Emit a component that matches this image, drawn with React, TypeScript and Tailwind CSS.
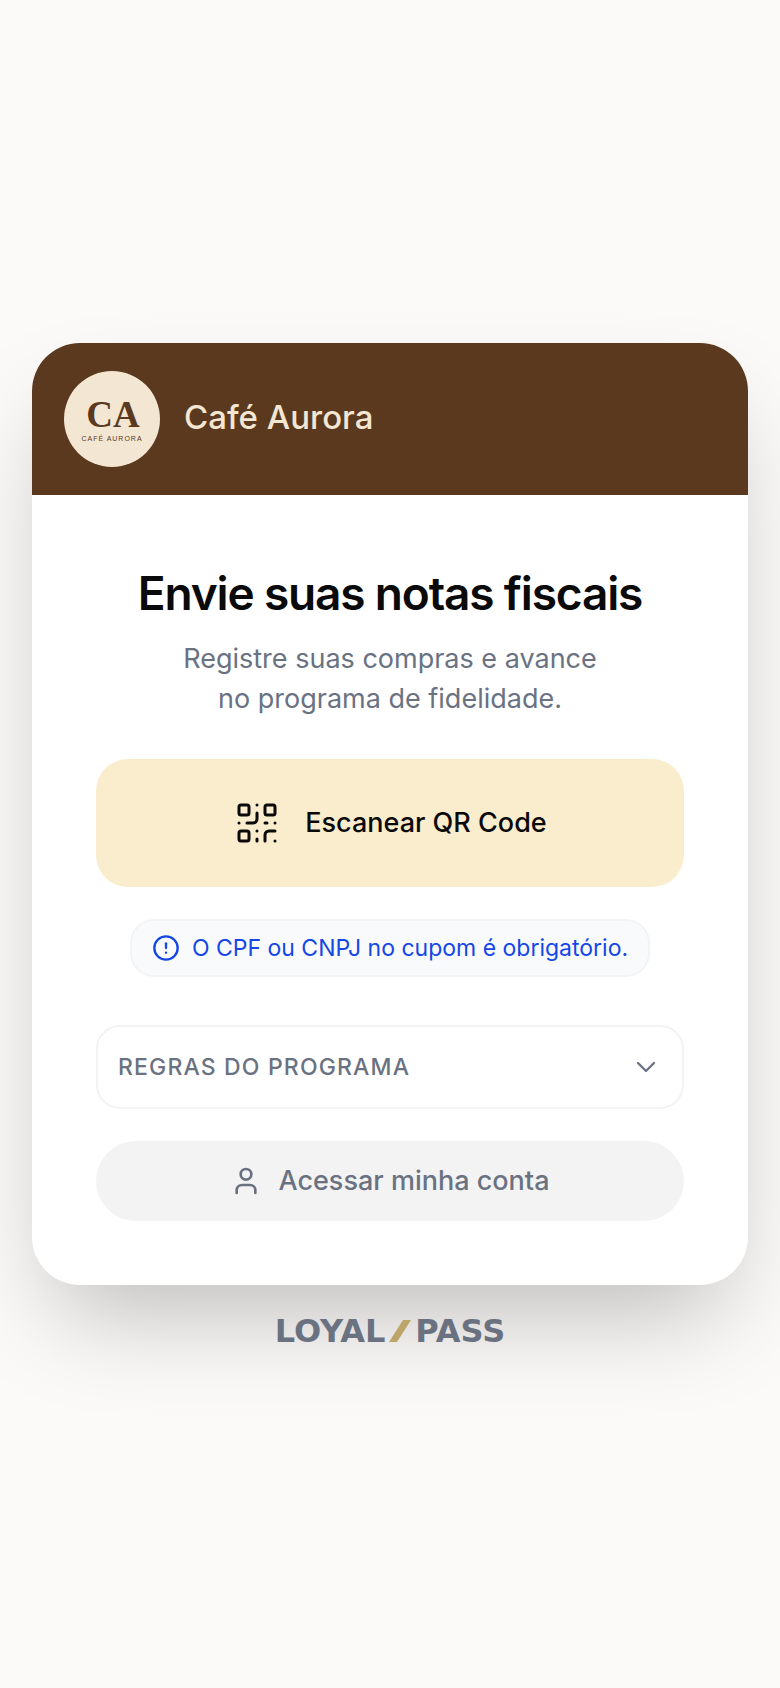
import { ChevronDown, CircleAlert, QrCode, User } from "lucide-react";
import { useState } from "react";

const BrandLogo = () => (
    <svg viewBox="0 0 96 96" className="size-24 shrink-0 rounded-full bg-[#f3e6d3]" role="img" aria-label="Café Aurora">
        <text x="49" y="56" textAnchor="middle" fontSize="37" fontWeight="700" fill="#5b391e" className="font-['Liberation_Serif',serif]">
            CA
        </text>
        <text x="48" y="70" textAnchor="middle" fontSize="7" letterSpacing="1" fill="#5b391e" className="font-['Liberation_Sans',sans-serif]">
            CAFÉ AURORA
        </text>
    </svg>
);

const LoyalPassLogo = () => (
    <div className="flex items-center h-7 text-[32px] font-bold text-gray-500 font-['DejaVu_Sans',sans-serif]">
        <span>LOYAL</span>
        <svg viewBox="0 0 22 22" className="mx-1 w-[22px] h-[22px]" aria-hidden="true">
            <path d="M14 0H22L8 22H0Z" fill="#bda569" />
        </svg>
        <span>PASS</span>
    </div>
);

const App: React.FC = () => {
    const [rulesOpen, setRulesOpen] = useState(false);

    return (
        <main className="min-h-screen px-8 flex flex-col items-center justify-center gap-8 bg-[#fbfaf8] font-['Inter',sans-serif]">
            <section className="w-full max-w-3xl rounded-[48px] overflow-hidden bg-white shadow-[0_50px_100px_-24px_rgba(0,0,0,0.25)]">
                <header className="px-8 py-7 flex items-center gap-6 bg-[#5b391e]">
                    <BrandLogo />
                    <span className="pb-1 text-[33px] leading-10 font-medium text-[#f3e6d3]">Café Aurora</span>
                </header>

                <div className="p-16 flex flex-col items-center">
                    <h1 className="pt-1 text-[46px] leading-15 font-semibold tracking-tight text-neutral-950">Envie suas notas fiscais</h1>
                    <p className="mt-4 text-[27px] leading-10 text-center text-gray-500">
                        Registre suas compras e avance
                        <br />
                        no programa de fidelidade.
                    </p>

                    <button className="mt-10 w-full h-32 flex items-center justify-center gap-6 rounded-[32px] bg-[#faedcd] text-[27px] font-medium text-neutral-950">
                        <QrCode size={48} strokeWidth={1.5} />
                        Escanear QR Code
                    </button>

                    <div className="mt-8 px-5 h-[58px] flex items-center gap-3 rounded-3xl border-2 border-gray-100 bg-gray-50 text-[23px] text-blue-700">
                        <CircleAlert size={28} />
                        O CPF ou CNPJ no cupom é obrigatório.
                    </div>

                    <button
                        onClick={() => setRulesOpen(!rulesOpen)}
                        aria-expanded={rulesOpen}
                        className="mt-12 px-5 w-full h-[84px] flex items-center justify-between rounded-3xl border-2 border-[#f3f3f3] text-[23px] font-medium tracking-wider text-gray-500"
                    >
                        REGRAS DO PROGRAMA
                        <ChevronDown size={32} strokeWidth={1.75} />
                    </button>

                    <button className="mt-8 w-full h-20 flex items-center justify-center gap-4 rounded-full bg-[#f3f3f3] text-[27px] font-medium text-gray-500">
                        <User size={32} />
                        Acessar minha conta
                    </button>
                </div>
            </section>

            <LoyalPassLogo />
        </main>
    );
};

export default App
